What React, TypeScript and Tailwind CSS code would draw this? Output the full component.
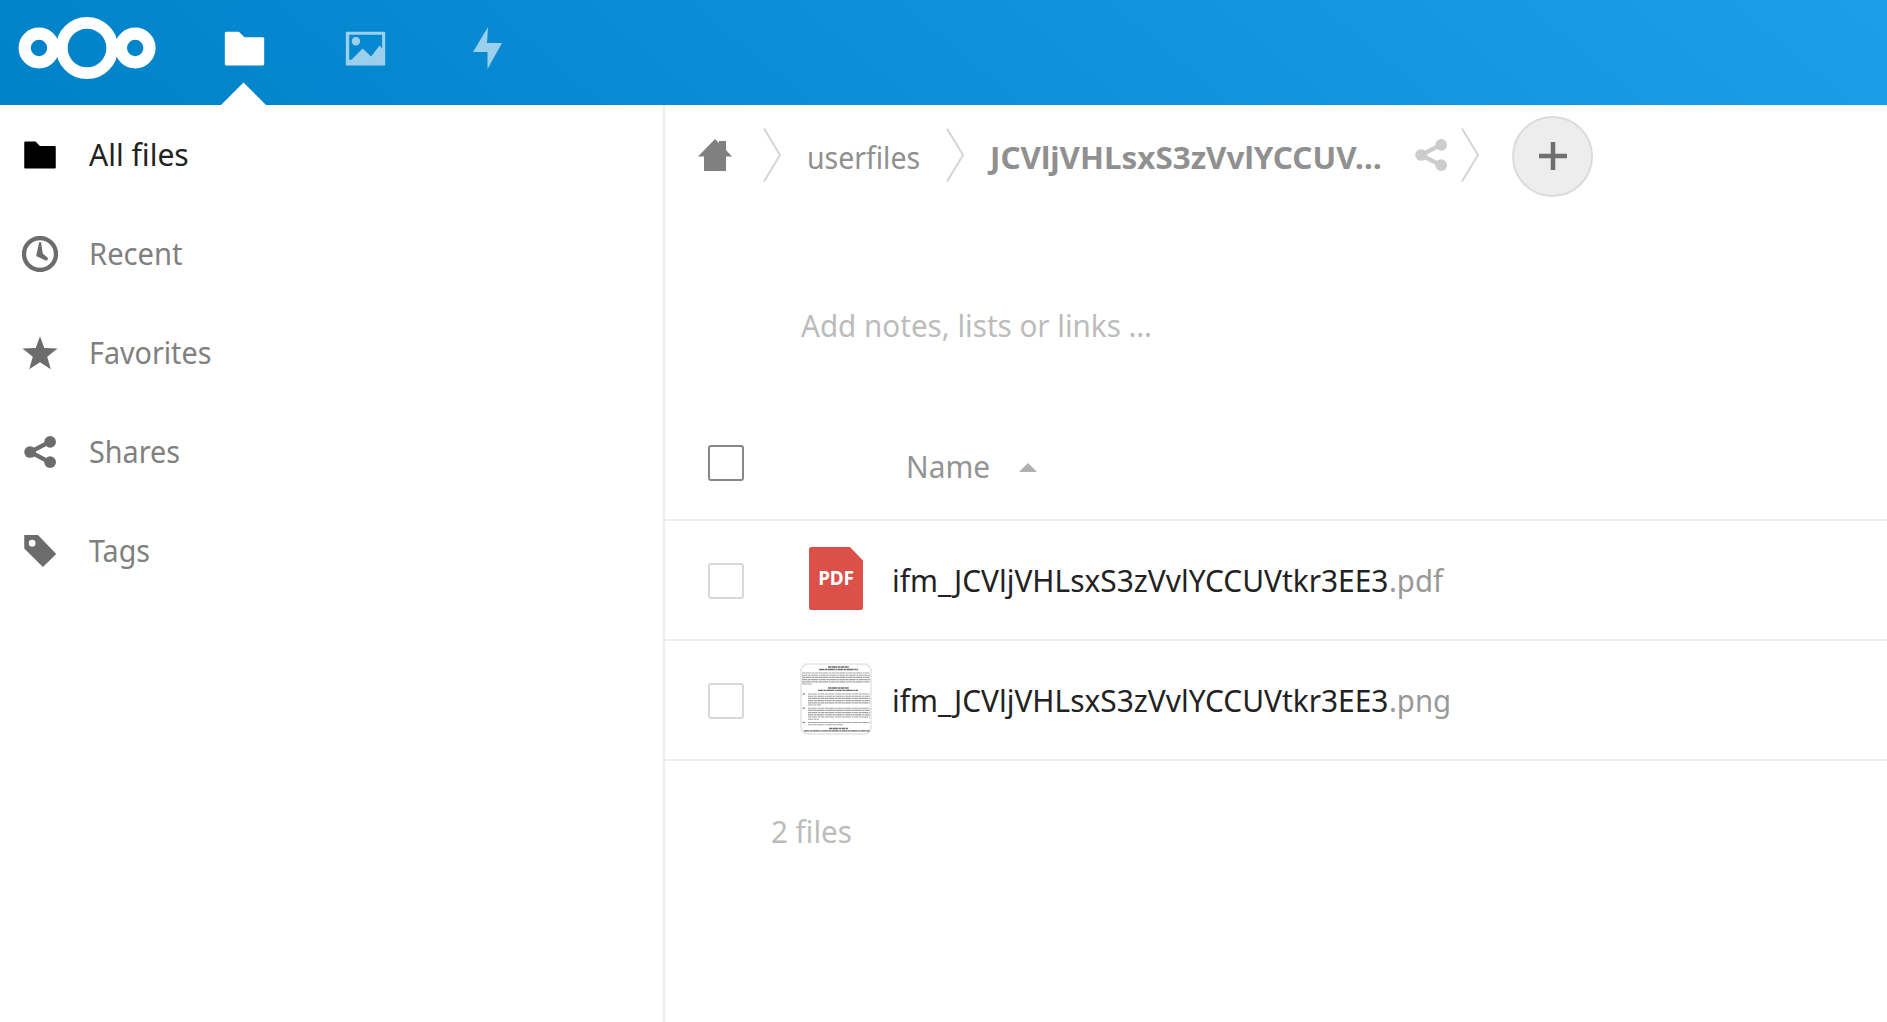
import type { ReactNode } from 'react';

const FOLDER = 'm1.5 2c-.25 0-.5.25-.5.5v11c0 .26.24.5.5.5h13c.26 0 .5-.241.5-.5v-9c0-.25-.25-.5-.5-.5h-6.5l-2-2z';

function Logo() {
  return (
    <svg className="ml-[18px] h-[64px] w-[140px]" viewBox="0 0 140 64" fill="none" stroke="#fff">
      <circle cx="21" cy="32" r="14.3" strokeWidth="12.2" />
      <circle cx="69" cy="32" r="25.2" strokeWidth="11.8" />
      <circle cx="117.2" cy="32" r="14.3" strokeWidth="12.2" />
    </svg>
  );
}

function ShareIcon({ className }: { className: string }) {
  return (
    <svg className={className} viewBox="0 0 16 16" fill="currentColor">
      <path d="M12.5 3.4L3.6 8l8.9 4.6" fill="none" stroke="currentColor" strokeWidth="1.9" />
      <circle cx="12.5" cy="3.5" r="2.6" />
      <circle cx="3.6" cy="8" r="2.6" />
      <circle cx="12.5" cy="12.5" r="2.6" />
    </svg>
  );
}

const icon = 'h-9 w-9 shrink-0';

const nav: { label: string; cls: string; icon: ReactNode }[] = [
  { label: 'All files', cls: 'scale-x-[0.97]', icon: <svg className={icon} viewBox="0 0 16 16"><path d={FOLDER} /></svg> },
  {
    label: 'Recent', cls: 'scale-x-[0.94]',
    icon: (
      <svg className={icon} viewBox="0 0 16 16" fill="currentColor">
        <circle cx="8" cy="8" r="7.1" fill="none" stroke="currentColor" strokeWidth="1.9" />
        <path d="M7.6 2.8h.9l.7 5 2.2 1.9c.3.6-.2 1.4-.9 1.2L6.3 8.9z" />
      </svg>
    ),
  },
  { label: 'Favorites', cls: 'scale-x-[0.925]', icon: <svg className={icon} viewBox="0 0 16 16" fill="currentColor"><path d="M8 .6l1.9 5.2 5.9.2-4.6 3.7 1.6 5.5L8 12.1l-4.8 3.1 1.6-5.5L.2 6l5.9-.2z" /></svg> },
  { label: 'Shares', cls: 'scale-x-[0.928]', icon: <ShareIcon className={icon} /> },
  { label: 'Tags', cls: 'scale-x-[0.923]', icon: <svg className={icon} viewBox="0 0 16 16" fill="currentColor"><path fillRule="evenodd" d="M1 .9v6l8.3 8.2L15.2 9.3 7.1.9zm3.5 2.1a1.5 1.5 0 1 1 0 3 1.5 1.5 0 0 1 0-3z" /></svg> },
];

/* Text condensed horizontally from its left edge. */
function Label({ className, children }: { className: string; children: ReactNode }) {
  return <span className={`inline-block origin-left whitespace-nowrap ${className}`}>{children}</span>;
}

function Chevron({ className }: { className: string }) {
  return (
    <svg className={`h-[54px] w-[18px] shrink-0 ${className}`} viewBox="0 0 18 54" fill="none" stroke="#d5d5d5" strokeWidth="2">
      <path d="M1 .5L17 27 1 53.5" />
    </svg>
  );
}

function PdfIcon() {
  return (
    <div className="relative mx-[9px] h-16 w-[54px] shrink-0">
      <svg className="h-16 w-[54px]" viewBox="0 0 54 64">
        <path fill="#db5048" d="M3 0h38L54 13.5v47a2.5 2.5 0 0 1-2.5 2.5h-49A2.5 2.5 0 0 1 0 60.500V2.5A2.5 2.5 0 0 1 3 0z" />
      </svg>
      <span className="absolute inset-x-0 top-[19px] text-center text-[19px] leading-[24px] font-bold tracking-[-0.2px] text-white">PDF</span>
    </div>
  );
}

/* Page preview: [y, x1, x2, bold] for each line of the document. */
const lines: [number, number, number, boolean][] = [
  [4, 28, 49, true], [6.5, 19, 58, true],
  [10, 2, 70, false], [12.2, 2, 70, false], [14.4, 2, 70, false], [16.6, 2, 70, false], [18.8, 2, 70, false], [21, 2, 12, false],
  [25, 28, 49, true], [27.3, 18, 58, true],
  [31, 8, 70, false], [33.2, 8, 70, false], [35.4, 8, 70, false], [37.6, 8, 70, false], [39.8, 8, 70, false], [42, 8, 21, false],
  [45.2, 8, 70, false], [47.4, 8, 70, false], [49.6, 8, 70, false], [51.8, 8, 70, false], [54, 8, 70, false], [56.2, 8, 19, false],
  [59.5, 8, 70, false], [61.7, 8, 43, false],
  [65.5, 29, 48, true], [67.8, 4, 70, true],
];

function Thumb() {
  return (
    <svg className="h-[72px] w-[72px] shrink-0" viewBox="0 0 72 72">
      <rect x="1" y="1" width="70" height="70" rx="7" fill="#fff" stroke="#e3e3e3" strokeWidth="1.5" />
      {lines.map(([y, a, b, bold], i) => (
        <path key={i} d={`M${a} ${y}H${b}`} stroke={bold ? '#707070' : '#a2a2a2'} strokeWidth={bold ? 1.3 : 1.15} strokeDasharray={i % 2 ? '5 .5 3 .4 7 .6 2 .4' : '3 .4 6 .6 2 .4 4 .5'} />
      ))}
      {[31, 45.2, 59.5].map((y) => <path key={y} d={`M2.5 ${y}h2.5`} stroke="#888" strokeWidth="1.2" />)}
    </svg>
  );
}

function Row({ ext, children }: { ext: string; children: ReactNode }) {
  return (
    <div className="flex h-[120px] items-center border-b-2 border-[#ededed] pl-[43px]">
      <span className="mt-[2px] h-9 w-9 shrink-0 rounded-[3px] border-2 border-[#d8d8d8]" />
      <div className="-mt-[2px] ml-14 flex w-[92px]">{children}</div>
      <span className="w-[497px] text-[#222]"><Label className="scale-x-[0.964]">ifm_JCVljVHLsxS3zVvlYCCUVtkr3EE3</Label></span>
      <Label className="scale-x-[0.947] text-[#999]">{ext}</Label>
    </div>
  );
}

export default function App() {
  return (
    <div className="flex h-[1022px] w-full flex-col overflow-hidden bg-white font-['Noto_Sans',sans-serif] text-[31px] leading-[44px] text-[#808080]">
      <header className="flex h-[105px] shrink-0 bg-[linear-gradient(40deg,#0082c9_0%,#1b9fe8_100%)]">
        <div className="flex h-24 items-center">
          <Logo />
          <div className="relative ml-[64px] flex h-24 w-[45px] items-center">
            <svg className="h-[45px] w-[45px]" viewBox="0 0 16 16" fill="#fff"><path d={FOLDER} /></svg>
            <svg className="absolute top-[82px] -left-px h-[23px] w-[45px]" viewBox="0 0 45 23" fill="#fff"><path d="M22.5 .5L45 23H0z" /></svg>
          </div>
          <svg className="ml-[76px] h-[45px] w-[45px]" viewBox="0 0 16 16" fill="#fff" fillOpacity=".6">
            <path fillRule="evenodd" d="M1.3 2a.3.3 0 0 0-.3.3v11.400a.3.3 0 0 0 .3.3h13.400a.3.3 0 0 0 .3-.3V2.300a.3.3 0 0 0-.3-.3zM2.200 3.100h11.700v4.800l-.9-1-3 3.900L7 8l-4 4h-.8zM4.600 3.900a1.500 1.500 0 1 0 0 3 1.500 1.500 0 0 0 0-3z" />
          </svg>
          <svg className="ml-[85px] h-[42px] w-[29px]" viewBox="0 0 29 42" fill="#fff" fillOpacity=".6"><path d="M15 0L0 25h14.5v17L29 16H14z" /></svg>
        </div>
      </header>
      <div className="flex min-h-0 flex-1">
        <aside className="w-[665px] shrink-0 border-r-2 border-[#ededed]">
          {nav.map((n, i) => (
            <a key={n.label} className={`flex h-[99px] items-center gap-[31px] pl-[22px] ${i === 0 ? 'text-[#222]' : 'text-[#6c6c6c]'}`}>
              {n.icon}
              <Label className={`-mt-px ${i === 0 ? '' : 'text-[#808080]'} ${n.cls}`}>{n.label}</Label>
            </a>
          ))}
        </aside>
        <main className="min-w-0 flex-1">
          <div className="flex h-[99px] items-center">
            <svg className="mt-px ml-[33px] h-8 w-[34px] shrink-0" viewBox="0 0 34 32" fill="#808080"><path d="M17 0l4 4V2h7v9l6 6.500h-6V32H6V17.500H0z" /></svg>
            <Chevron className="ml-[31px]" />
            <span className="mt-[5px] ml-[26px] w-[112px] text-[#909090]"><Label className="scale-x-[0.917]">userfiles</Label></span>
            <Chevron className="ml-[27px]" />
            <span className="mt-[5px] ml-[26px] w-[393px] font-bold text-[#909090]"><Label className="scale-x-[1.012]">JCVljVHLsxS3zVvlYCCUV…</Label></span>
            <ShareIcon className="ml-[30px] h-9 w-9 shrink-0 text-[#ccc]" />
            <Chevron className="ml-[12px]" />
            <button className="mt-[4px] ml-[33px] flex h-[81px] w-[81px] shrink-0 items-center justify-center rounded-full border-2 border-[#dbdbdb] bg-[#ededed]">
              <svg className="mb-px h-7 w-7" viewBox="0 0 28 28" stroke="#6f6f6f" strokeWidth="4.5"><path d="M14 0v28M0 14h28" /></svg>
            </button>
          </div>
          <p className="flex h-[241px] items-center pt-px pl-[136px] text-[#bcbcbc]"><Label className="scale-x-[0.955]">Add notes, lists or links …</Label></p>
          <div className="flex h-[76px] border-b-2 border-[#ededed] pl-[43px]">
            <span className="h-9 w-9 rounded-[3px] border-2 border-[#878787]" />
            <span className="-mt-px ml-[162px] w-[84px] text-[#949494]"><Label className="scale-x-[0.963]">Name</Label></span>
            <svg className="mt-[18px] ml-[29px] h-[9px] w-[18px]" viewBox="0 0 18 9" fill="#b0b0b0"><path d="M9 0l9 9H0z" /></svg>
          </div>
          <Row ext=".pdf"><PdfIcon /></Row>
          <Row ext=".png"><Thumb /></Row>
          <p className="pt-[48px] pl-[106px] text-[#bcbcbc]"><Label className="scale-x-[0.954]">2 files</Label></p>
        </main>
      </div>
    </div>
  );
}
